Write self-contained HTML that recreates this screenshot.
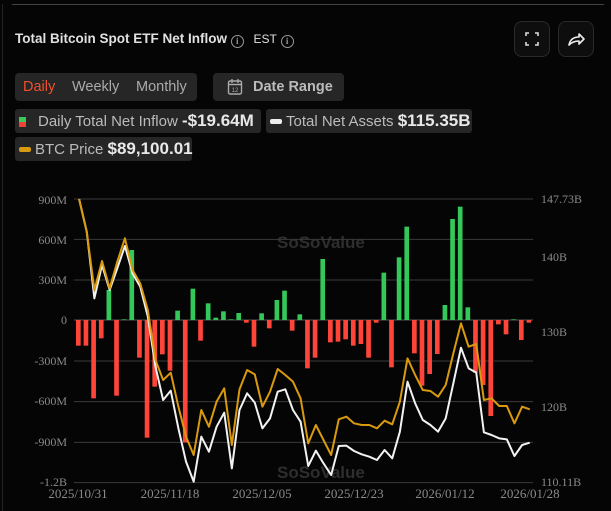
<!DOCTYPE html>
<html><head><meta charset="utf-8"><style>
html,body{margin:0;padding:0;background:#050505;width:611px;height:511px;overflow:hidden;font-family:"Liberation Sans",sans-serif;}
.abs{position:absolute}
.title{left:15px;top:31px;color:#e0e0e0;font-size:13.5px;font-weight:bold;white-space:nowrap}
.info{display:inline-block;width:11px;height:11px;border:1.3px solid #999;border-radius:50%;color:#999;font-size:9px;line-height:11px;text-align:center;vertical-align:-1px;font-weight:bold;font-family:"Liberation Serif",serif}
.btn{width:34px;height:34px;border:1px solid #2a2a2a;border-radius:8px;background:#0e0e0e;top:21px}
.pill{background:#262626;border-radius:4px;height:28px;top:73px}
.tab{top:79px;font-size:14.5px;color:#aaa}
.leg{background:#262626;border-radius:3px;height:24px;color:#bbb;font-size:15px;line-height:24px;white-space:nowrap}
.leg b{color:#e8e8e8;font-size:17px}
.yl{color:#8a8a8a;font-family:"Liberation Serif",serif;font-size:12px;width:60px;text-align:right;left:7px}
.yr{color:#8a8a8a;font-family:"Liberation Serif",serif;font-size:12px;left:541px}
.xl{color:#8a8a8a;font-family:"Liberation Serif",serif;font-size:13px;top:486px;width:80px;text-align:center}
.wm{color:#2e2e2e;font-weight:bold;font-size:17px}
</style></head><body>
<div class="abs" style="left:12px;top:4px;width:592px;height:1px;background:#444"></div>
<div class="abs" style="left:2px;top:4px;width:1px;height:507px;background:#222"></div>
<div class="abs title">Total Bitcoin Spot ETF Net Inflow <span class="info">i</span> <span style="font-weight:normal;font-size:12px;margin-left:6px">EST</span> <span class="info">i</span></div>
<div class="abs btn" style="left:514px"><svg width="34" height="34"><g fill="none" stroke="#ddd" stroke-width="1.6"><path d="M11 14V11h3M20 11h3v3M23 20v3h-3M14 23h-3v-3"/></g></svg></div>
<div class="abs btn" style="left:558px"><svg width="34" height="34"><path d="M10 23c1-5 4-8 10-8v-3l5 5-5 5v-3c-4 0-7 1-10 4z" fill="none" stroke="#eee" stroke-width="1.6" stroke-linejoin="round"/></svg></div>
<div class="abs pill" style="left:15px;width:182px"></div>
<div class="abs tab" style="left:23px;color:#f0502a">Daily</div>
<div class="abs tab" style="left:72px">Weekly</div>
<div class="abs tab" style="left:136px">Monthly</div>
<div class="abs pill" style="left:213px;width:131px"></div>
<svg class="abs" style="left:227px;top:78px" width="16" height="18"><rect x="1.5" y="3" width="13" height="13" rx="1.5" fill="none" stroke="#aaa" stroke-width="1.4"/><path d="M1.5 6.5h13M5 1v4M11 1v4" stroke="#aaa" stroke-width="1.4"/><text x="8" y="14" font-size="6" fill="#aaa" text-anchor="middle" font-family="Liberation Sans">12</text></svg>
<div class="abs tab" style="left:253px;color:#bbb;font-weight:bold">Date Range</div>
<div class="abs leg" style="left:15px;top:109px;width:246px"><span style="display:inline-block;width:7px;height:10px;margin:0 12px 0 4px;vertical-align:-1px;background:linear-gradient(#3ac95a 50%,#ef4136 50%)"></span>Daily Total Net Inflow <b>-$19.64M</b></div>
<div class="abs leg" style="left:266px;top:109px;width:206px"><span style="display:inline-block;width:12px;height:5px;border-radius:2px;background:#eee;margin:0 4px 0 4px;vertical-align:2px"></span>Total Net Assets <b>$115.35B</b></div>
<div class="abs leg" style="left:15px;top:137px;width:177px"><span style="display:inline-block;width:12px;height:5px;border-radius:2px;background:#d89a10;margin:0 4px 0 4px;vertical-align:2px"></span>BTC Price <b>$89,100.01</b></div>

<div class="abs wm" style="left:277px;top:233px">SoSoValue</div>
<div class="abs wm" style="left:277px;top:463px">SoSoValue</div>

<svg id="ch" class="abs" style="left:0;top:180px" width="611" height="331" viewBox="0 0 1568 993" preserveAspectRatio="none"></svg>

<div class="abs yl" style="top:193px">900M</div>
<div class="abs yl" style="top:233px">600M</div>
<div class="abs yl" style="top:273px">300M</div>
<div class="abs yl" style="top:313px">0</div>
<div class="abs yl" style="top:354px">-300M</div>
<div class="abs yl" style="top:394px">-600M</div>
<div class="abs yl" style="top:435px">-900M</div>
<div class="abs yl" style="top:475px">-1.2B</div>
<div class="abs yr" style="top:192px">147.73B</div>
<div class="abs yr" style="top:250px">140B</div>
<div class="abs yr" style="top:325px">130B</div>
<div class="abs yr" style="top:400px">120B</div>
<div class="abs yr" style="top:475px">110.11B</div>
<div class="abs xl" style="left:38px">2025/10/31</div>
<div class="abs xl" style="left:130px">2025/11/18</div>
<div class="abs xl" style="left:222px">2025/12/05</div>
<div class="abs xl" style="left:314px">2025/12/23</div>
<div class="abs xl" style="left:405px">2026/01/12</div>
<div class="abs xl" style="left:490px">2026/01/28</div>
<script>
var s=document.getElementById('ch'),h='';
[57,178,300,543,665,787,908].forEach(function(y){h+='<line x1="190" x2="1368" y1="'+y+'" y2="'+y+'" stroke="#3a3a3a" stroke-width="1" vector-effect="non-scaling-stroke"/>';});
h+='<line x1="190" x2="1368" y1="420" y2="420" stroke="#555" stroke-width="1" vector-effect="non-scaling-stroke"/>';
var b=[497,497,655,475,330,647,418,210,533,773,620,523,572,392,787,326,482,370,413,394,418,399,428,500,400,445,360,332,452,403,565,533,237,487,485,478,497,492,533,428,278,562,232,140,520,617,582,522,375,117,80,382,578,615,708,433,463,418,480,428];
for(var i=0;i<b.length;i++){var x=201+i*19.6,v=b[i],y=Math.min(v,420),hh=Math.abs(v-420);h+='<rect x="'+(x-6)+'" y="'+y+'" width="12" height="'+Math.max(hh,2)+'" fill="'+(v<420?'#34c759':'#ff453a')+'"/>';}
var g=[57,155,330,243,325,245,175,270,310,390,540,600,578,680,770,825,690,740,665,625,795,628,570,583,680,635,567,585,605,655,790,735,780,825,718,710,730,735,735,745,722,733,665,535,585,630,633,650,615,520,430,500,492,660,655,678,678,730,680,688];
var w=[57,155,355,255,330,265,198,280,320,410,560,660,632,745,845,905,770,815,740,698,865,690,640,668,745,715,635,628,690,725,858,812,850,885,798,797,813,823,830,840,810,835,755,605,670,720,735,755,715,610,503,565,578,757,765,775,778,828,795,788];
function pl(a,c){var p=a.map(function(y,i){return (203+i*19.6).toFixed(1)+','+y}).join(' ');return '<polyline points="'+p+'" fill="none" stroke="'+c+'" stroke-width="2" stroke-linejoin="round" vector-effect="non-scaling-stroke"/>';}
h+=pl(w,'#f2f2f2')+pl(g,'#d99a0e');
s.innerHTML=h;
</script>
</body></html>
